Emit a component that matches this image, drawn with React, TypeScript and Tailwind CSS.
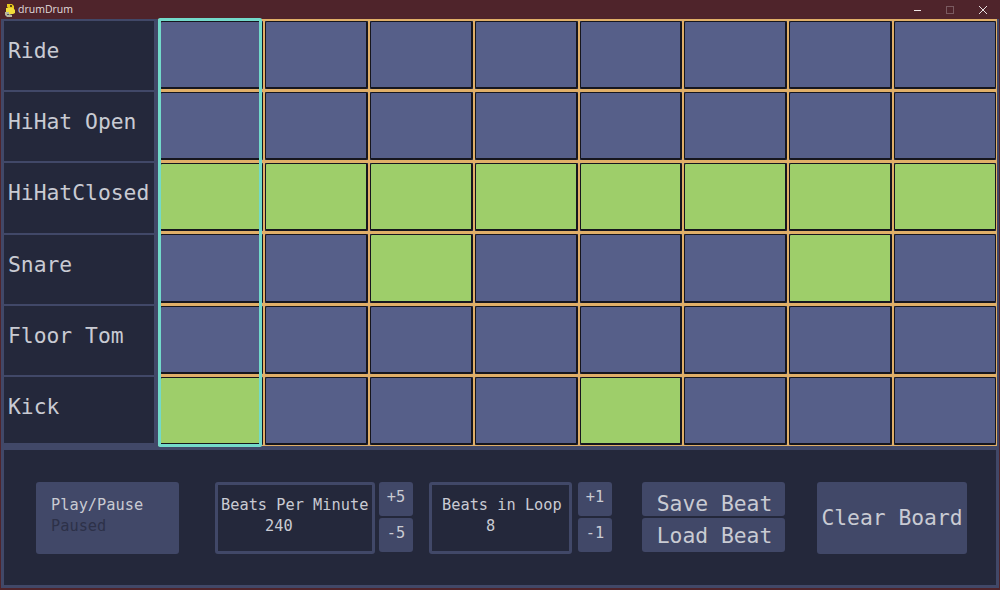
const mono = "font-['DejaVu_Sans_Mono',monospace]";

const labels = ["Ride", "HiHat Open", "HiHatClosed", "Snare", "Floor Tom", "Kick"];
const on: Record<number, number[]> = {
  0: [],
  1: [],
  2: [0, 1, 2, 3, 4, 5, 6, 7],
  3: [2, 6],
  4: [],
  5: [0, 4],
};

function Cell({ active, last }: { active: boolean; last: boolean }) {
  return (
    <div className={"border-t-2 border-b border-l-2 border-[#e0af68] min-h-0 min-w-0 flex " + (last ? "border-r" : "border-r-0")}>
      <div
        className={
          "flex-1 border-t border-b-2 border-l border-[#16161e] rounded-[2px] " +
          (last ? "border-r " : "border-r-2 ") +
          (active ? "bg-[#9ece6a]" : "bg-[#565f89]")
        }
      />
    </div>
  );
}

function SmallButton({ children }: { children: string }) {
  return (
    <div className="w-[34px] h-[34px] rounded-[3px] bg-[#414868] text-[15.3px] leading-[30px] text-center text-[#c9cbd3]">
      {children}
    </div>
  );
}

function Stepper({ up, down, ml }: { up: string; down: string; ml: string }) {
  return (
    <div className={`flex flex-col gap-[2px] ${ml}`}>
      <SmallButton>{up}</SmallButton>
      <SmallButton>{down}</SmallButton>
    </div>
  );
}

function ValueBox({ title, value, w, pl, valuePl }: { title: string; value: string; w: string; pl: string; valuePl: string }) {
  return (
    <div className={`${w} h-[72px] rounded-[3px] border-[3px] border-[#414868] text-[15.3px] leading-[21px] text-[#c9cbd3] pt-[10px] ${pl}`}>
      <div className="whitespace-pre">{title}</div>
      <div className={`whitespace-pre ${valuePl}`}>{value}</div>
    </div>
  );
}

function WideButton({ children, leading }: { children: string; leading: string }) {
  return (
    <div className={`w-[143px] h-[34px] rounded-[3px] bg-[#414868] pl-[2px] text-[21.33px] text-center text-[#c9cbd3] whitespace-pre ${leading}`}>
      {children}
    </div>
  );
}

function Logo() {
  return (
    <svg width="12" height="14" viewBox="0 0 12 14" className="ml-[4px]">
      <path d="M3 1h5l2 2v3H5L3 4z" fill="#e8c81e" />
      <path d="M2 5h7l2 2v3l-2 1H4L2 9z" fill="#f2dc3a" />
      <path d="M1 9h4v2l3 1v2H3l-2-2z" fill="#b9b6a0" />
      <rect x="6" y="2" width="2" height="2" fill="#5a4a10" />
      <rect x="3" y="11" width="2" height="1" fill="#55555a" />
    </svg>
  );
}

export default function App() {
  return (
    <div className={`${mono} w-[1000px] h-[590px] bg-[#4f242b] flex flex-col overflow-hidden`}>
      <div className="h-[19px] flex items-center shrink-0">
        <Logo />
        <span className="ml-[2px] text-[10.5px] text-[#e0dcdc] font-['Open_Sans',sans-serif]">drumDrum</span>
        <div className="ml-auto flex items-center">
          <svg width="10" height="10" viewBox="0 0 10 10" className="mr-[22px]"><path d="M1 5.5h7" stroke="#f0e8e8" strokeWidth="1" /></svg>
          <svg width="10" height="10" viewBox="0 0 10 10" className="mr-[23px]"><rect x="1.5" y="1.5" width="7" height="7" fill="none" stroke="#7a5a60" strokeWidth="1" /></svg>
          <svg width="10" height="10" viewBox="0 0 10 10" className="mr-[12px]"><path d="M1 1l8 8M9 1l-8 8" stroke="#e8e0e0" strokeWidth="1" /></svg>
        </div>
      </div>

      <div className="h-[569px] mx-[1px] bg-[#414868] flex flex-col min-h-0">
        <div className="h-[427px] flex shrink-0">
          <div className="w-[157px] shrink-0 pl-[3px] pr-[4px] pt-[2px] pb-[3px] grid grid-rows-[repeat(5,69.2px)_66px] gap-[2px]">
            {labels.map((l) => (
              <div key={l} className="bg-[#24283b] text-[21.33px] leading-[24px] pl-[4px] pt-[18px] text-[#c9cbd3] whitespace-pre">
                {l}
              </div>
            ))}
          </div>
          <div className="relative w-[839px] grid grid-cols-8 grid-rows-6">
            {labels.map((_, r) =>
              Array.from({ length: 8 }, (_, c) => (
                <Cell key={`${r}-${c}`} active={on[r].includes(c)} last={c === 7} />
              ))
            )}
            <div className="absolute left-0 top-[-1px] bottom-[-1px] w-[104px] border-[3px] rounded-[2px] border-[#73daca]" />
          </div>
        </div>

        <div className="mt-[4px] mx-[3px] mb-[3px] flex-1 bg-[#24283b] flex items-center pl-[32px]">
          <div className="w-[143px] h-[72px] rounded-[3px] bg-[#414868] text-[15.3px] leading-[21px] pl-[15px] pt-[13px] text-[#c9cbd3] whitespace-pre">
            <div>Play/Pause</div>
            <div className="text-[#2d3148]">Paused</div>
          </div>

          <div className="ml-[36px] flex items-start">
            <ValueBox title="Beats Per Minute" value="240" w="w-[160px]" pl="pl-[3px]" valuePl="pl-[44px]" />
            <Stepper up="+5" down="-5" ml="ml-[4px]" />
          </div>

          <div className="ml-[16px] flex items-start">
            <ValueBox title="Beats in Loop" value="8" w="w-[143px]" pl="pl-[10px]" valuePl="pl-[44px]" />
            <Stepper up="+1" down="-1" ml="ml-[6px]" />
          </div>

          <div className="ml-[30px] h-[72px] flex flex-col gap-[2px]">
            <WideButton leading="leading-[44px]">Save Beat</WideButton>
            <WideButton leading="leading-[36px]">Load Beat</WideButton>
          </div>

          <div className="ml-[32px] w-[150px] h-[72px] rounded-[3px] bg-[#414868] text-[21.33px] leading-[72px] text-center text-[#c9cbd3] whitespace-pre">
            Clear Board
          </div>
        </div>
      </div>
    </div>
  );
}
